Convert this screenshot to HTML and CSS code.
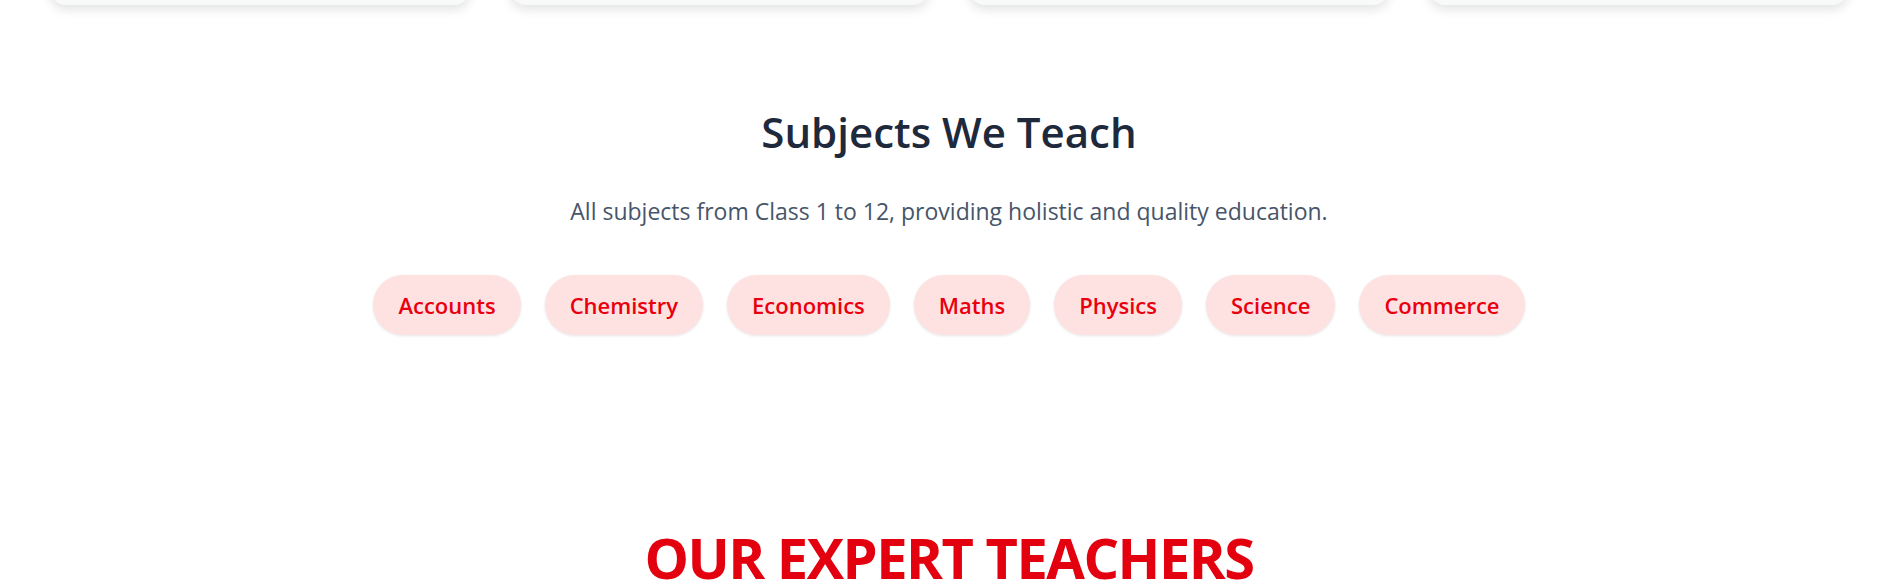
FILE: index.html
```html
<!DOCTYPE html>
<html lang="en">
<head>
<meta charset="utf-8">
<title>Subjects We Teach</title>
<link rel="stylesheet" href="styles.css">
</head>
<body>
<section class="features">
  <div class="card"></div>
  <div class="card"></div>
  <div class="card"></div>
  <div class="card"></div>
</section>
<section class="subjects">
  <h2 class="subjects-title">Subjects We Teach</h2>
  <p class="subjects-sub">All subjects from Class 1 to 12, providing holistic and quality education.</p>
  <ul class="pills">
    <li class="pill">Accounts</li>
    <li class="pill">Chemistry</li>
    <li class="pill">Economics</li>
    <li class="pill">Maths</li>
    <li class="pill">Physics</li>
    <li class="pill">Science</li>
    <li class="pill">Commerce</li>
  </ul>
</section>
<section class="teachers">
  <h2 class="teachers-title">OUR EXPERT TEACHERS</h2>
</section>
</body>
</html>
```
FILE: styles.css
```css
* { box-sizing: border-box; }
html, body { margin: 0; padding: 0; background: #ffffff; }
body {
  font-family: "Open Sans", "Noto Sans", sans-serif;
  overflow: hidden;
}
.features {
  display: grid;
  grid-template-columns: repeat(4, 1fr);
  gap: 40px;
  padding: 0 50px;
  margin-top: -200px;
}
.card {
  height: 205px;
  background: #f8fafa;
  border-radius: 16px;
  box-shadow: 0 4px 12px rgba(0, 0, 0, 0.12);
}
.subjects {
  text-align: center;
  padding-top: 102px;
}
.subjects-title {
  margin: 0;
  font-size: 42px;
  line-height: 50px;
  font-weight: 600;
  color: #1e293b;
}
.subjects-sub {
  margin: 38px 0 0;
  font-size: 23px;
  line-height: 32px;
  color: #475569;
}
.pills {
  list-style: none;
  margin: 48px 0 0;
  padding: 0;
  display: flex;
  justify-content: center;
  gap: 24px;
}
.pill {
  background: #fee2e2;
  color: #e8000f;
  font-weight: 600;
  font-size: 22px;
  line-height: 30px;
  padding: 15px 25px;
  border-radius: 999px;
  box-shadow: 0 1px 3px rgba(0, 0, 0, 0.1);
}
.teachers {
  text-align: center;
  padding-top: 187px;
}
.teachers-title {
  margin: 0;
  font-size: 56px;
  line-height: 70px;
  font-weight: 700;
  color: #e3000f;
  letter-spacing: -1.5px;
}
```
